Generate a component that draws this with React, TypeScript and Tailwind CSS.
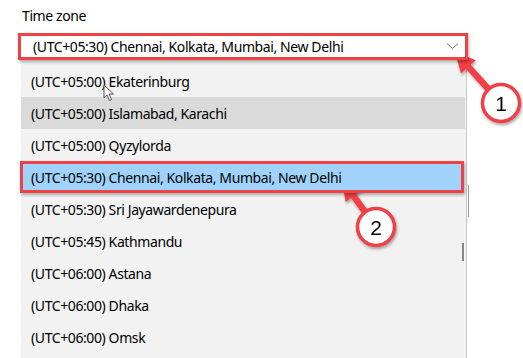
import React from "react";

const zones = [
  { label: "(UTC+05:00) Ekaterinburg" },
  { label: "(UTC+05:00) Islamabad, Karachi", hover: true },
  { label: "(UTC+05:00) Qyzylorda" },
  { label: "(UTC+05:30) Chennai, Kolkata, Mumbai, New Delhi", selected: true },
  { label: "(UTC+05:30) Sri Jayawardenepura" },
  { label: "(UTC+05:45) Kathmandu" },
  { label: "(UTC+06:00) Astana" },
  { label: "(UTC+06:00) Dhaka" },
  { label: "(UTC+06:00) Omsk" },
];

const RED = "#ef4146";

function Callout({ cx, cy, tip, n }: { cx: number; cy: number; tip: [number, number]; n: string }) {
  // arrow from the numbered circle to the tip
  const dx = tip[0] - cx;
  const dy = tip[1] - cy;
  const len = Math.hypot(dx, dy);
  const ux = dx / len;
  const uy = dy / len;
  const headLen = 20;
  const half = 10;
  const bx = tip[0] - ux * headLen;
  const by = tip[1] - uy * headLen;
  const px = -uy;
  const py = ux;
  const head = `${tip[0]},${tip[1]} ${bx + px * half},${by + py * half} ${bx - px * half},${by - py * half}`;
  return (
    <g filter="url(#sh)">
      <line x1={cx} y1={cy} x2={bx + ux * 2} y2={by + uy * 2} stroke={RED} strokeWidth={6.5} />
      <polygon points={head} fill={RED} />
      <circle cx={cx} cy={cy} r={18.5} fill="#fff" stroke={RED} strokeWidth={3.5} />
      <text
        x={cx}
        y={cy + 7.5}
        textAnchor="middle"
        fontSize={21}
        fontFamily="'Liberation Sans', Arial, sans-serif"
        fill="#000"
      >
        {n}
      </text>
    </g>
  );
}

export default function App() {
  return (
    <div className="relative h-[358px] w-[523px] overflow-hidden bg-white font-['Noto_Sans',sans-serif] text-[14px] tracking-[-0.4px] text-black">
      <div className="pl-[22px] pt-[6px] leading-[20px]">Time zone</div>

      <div className="relative z-10 mt-[7px] ml-[18px] flex h-[27px] w-[450px] items-center justify-between border-[3px] border-[#ef4146] bg-white pl-[12px] pr-[6px] shadow-[1px_2px_3px_rgba(0,0,0,0.3)]">
        <span className="leading-[20px]">(UTC+05:30) Chennai, Kolkata, Mumbai, New Delhi</span>
        <svg width="13" height="8" viewBox="0 0 13 8" className="mt-[-2px]">
          <polyline points="1,1.5 6.5,6.5 12,1.5" fill="none" stroke="#6b6b6b" strokeWidth="1" />
        </svg>
      </div>

      <div className="relative ml-[21px] h-[298px] w-[446px] border-r border-[#c8c8c8] bg-[#f2f2f2] pt-[5px]">
        {zones.map((z) =>
          z.selected ? (
            <div
              key={z.label}
              className="relative z-10 -ml-px flex h-[32px] w-[444px] items-center border-[3px] border-[#ef4146] bg-[#a0d3fb] pl-[8px] shadow-[1px_2px_3px_rgba(0,0,0,0.3)]"
            >
              {z.label}
            </div>
          ) : (
            <div
              key={z.label}
              className={`flex h-[32px] items-center pl-[10px] ${z.hover ? "mr-[1px] bg-[#dadada]" : ""}`}
            >
              {z.label}
            </div>
          )
        )}
        <div className="absolute left-[441px] top-[183px] h-[18px] w-[2px] bg-[#858585]" />
      </div>

      <div className="absolute left-[468px] top-[185px] h-[32px] w-px bg-[#9a9a9a]" />

      {/* mouse pointer */}
      <svg className="absolute left-[103px] top-[84px]" width="13" height="18" viewBox="0 0 13 18">
        <path d="M1 1 L1 14 L4 11 L6.5 16.5 L8.5 15.5 L6 10 L10.5 10 Z" fill="#fff" stroke="#555" strokeWidth="1" />
      </svg>

      <svg className="absolute left-0 top-0" width="523" height="358" viewBox="0 0 523 358">
        <defs>
          <filter id="sh" x="-20%" y="-20%" width="140%" height="140%">
            <feDropShadow dx="1" dy="2" stdDeviation="1.5" floodColor="#000" floodOpacity="0.35" />
          </filter>
        </defs>
        <Callout cx={501} cy={103} tip={[455, 52]} n="1" />
        <Callout cx={376} cy={227} tip={[342, 180]} n="2" />
      </svg>
    </div>
  );
}
